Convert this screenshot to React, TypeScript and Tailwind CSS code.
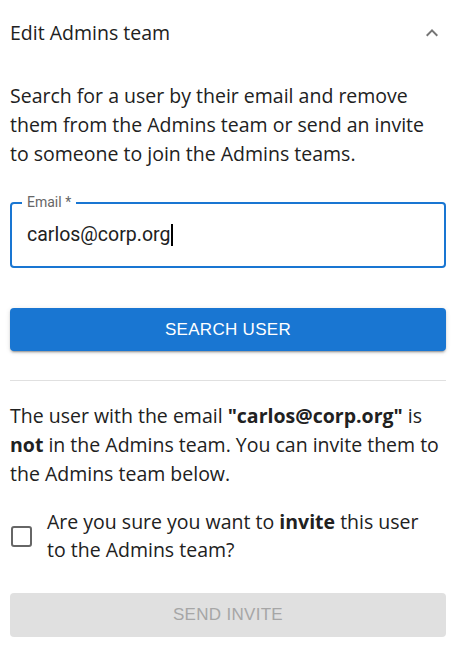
import React from 'react';

const App = () => {
  return (
    <div className="w-[462px] h-[662px] bg-white font-['Open_Sans',sans-serif] text-[#212121] overflow-hidden">
      {/* Accordion header */}
      <div className="flex items-center justify-between pl-[10px] pr-[18px] h-[66px]">
        <span className="text-[19.5px] leading-none">Edit Admins team</span>
        <svg width="24" height="24" viewBox="0 0 24 24" className="fill-[#757575]">
          <path d="M12 8l-6 6 1.41 1.41L12 10.83l4.59 4.58L18 14z" />
        </svg>
      </div>

      <div className="pl-[10px] pr-[16px] pt-[15px]">
        <p className="text-[19.5px] leading-[29px]">
          Search for a user by their email and remove them from the Admins team or send an invite to someone to join the Admins teams.
        </p>

        {/* Email field */}
        <div className="relative mt-[34px] h-[66px] rounded-[4px] border-2 border-[#1976d2] font-['Roboto',sans-serif]">
          <span className="absolute -top-[10px] left-[10px] bg-white px-[5px] text-[14px] leading-[16px] text-[#666]">
            Email *
          </span>
          <div className="flex items-center h-full px-[15px] text-[19.5px] text-[#212121]">
            carlos@corp.org
            <span className="w-[2px] h-[22px] bg-black ml-[1px]" />
          </div>
        </div>

        <button className="mt-[40px] w-full h-[43px] rounded-[4px] bg-[#1976d2] text-white uppercase text-[17px] tracking-[0.3px] font-['Liberation_Sans',sans-serif] shadow-[0_3px_1px_-2px_rgba(0,0,0,0.2),0_2px_2px_0_rgba(0,0,0,0.14),0_1px_5px_0_rgba(0,0,0,0.12)]">
          Search user
        </button>

        <div className="mt-[29px] h-px bg-[#e0e0e0]" />

        <p className="mt-[20px] text-[19.5px] leading-[29px]">
          The user with the email <b>"carlos@corp.org"</b> is <b>not</b> in the Admins team. You can invite them to the Admins team below.
        </p>

        <div className="mt-[20px] flex items-center gap-[15px]">
          <div className="ml-[1px] w-[21px] h-[21px] shrink-0 rounded-[3px] border-2 border-[#666]" />
          <p className="pr-[16px] text-[19.5px] leading-[28px]">
            Are you sure you want to <b>invite</b> this user to the Admins team?
          </p>
        </div>

        <button disabled className="mt-[29px] w-full h-[44px] rounded-[4px] bg-[#e0e0e0] text-[#a6a6a6] uppercase text-[17px] tracking-[0.3px] font-['Liberation_Sans',sans-serif]">
          Send invite
        </button>
      </div>
    </div>
  );
};

export default App;
